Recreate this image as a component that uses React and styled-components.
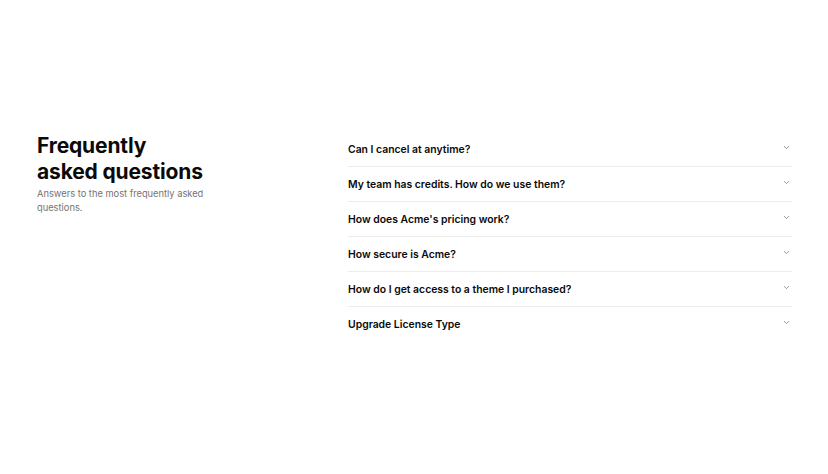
import React from "react";
import styled, { createGlobalStyle } from "styled-components";
import { ChevronDown } from "lucide-react";

const GlobalStyle = createGlobalStyle`
  * { box-sizing: border-box; }
  body {
    margin: 0;
    background: #fff;
    font-family: Inter, "Noto Sans", sans-serif;
    color: #0a0a0a;
  }
`

const Page = styled.div`
  min-height: 100vh;
  display: flex;
  align-items: center;
  padding: 0 36px 0 37px;
`

const Layout = styled.section`
  width: 100%;
  display: grid;
  grid-template-columns: 279px 1fr;
  gap: 32px;
  align-items: start;
`

const Intro = styled.div`
  display: flex;
  flex-direction: column;
  gap: 2px;
  padding-top: 1px;
`

const Title = styled.h2`
  margin: 0;
  font-size: 21px;
  line-height: 26px;
  font-weight: 700;
  letter-spacing: -0.15px;
`

const Subtitle = styled.p`
  margin: 0;
  width: 175px;
  font-size: 9.3px;
  line-height: 14px;
  color: #737373;
`

const List = styled.div`
  display: flex;
  flex-direction: column;
`

const Item = styled.div`
  height: 35px;
  display: flex;
  align-items: center;
  justify-content: space-between;
  border-bottom: ${props => props.last ? "none" : "1px solid #ececec"};
`

const Question = styled.span`
  font-size: 10.4px;
  font-weight: 600;
`

const Chevron = styled(ChevronDown)`
  color: #737373;
  margin-top: -4px;
  margin-right: 1px;
`

const questions = [
  "Can I cancel at anytime?",
  "My team has credits. How do we use them?",
  "How does Acme's pricing work?",
  "How secure is Acme?",
  "How do I get access to a theme I purchased?",
  "Upgrade License Type",
];

const App = () => {
  return (
    <Page>
      <GlobalStyle />
      <Layout>
        <Intro>
          <Title>Frequently<br />asked questions</Title>
          <Subtitle>Answers to the most frequently asked questions.</Subtitle>
        </Intro>
        <List>
          {questions.map((q, i) => (
            <Item key={q} last={i === questions.length - 1}>
              <Question>{q}</Question>
              <Chevron size={9} strokeWidth={2} />
            </Item>
          ))}
        </List>
      </Layout>
    </Page>
  )
};

export default App
